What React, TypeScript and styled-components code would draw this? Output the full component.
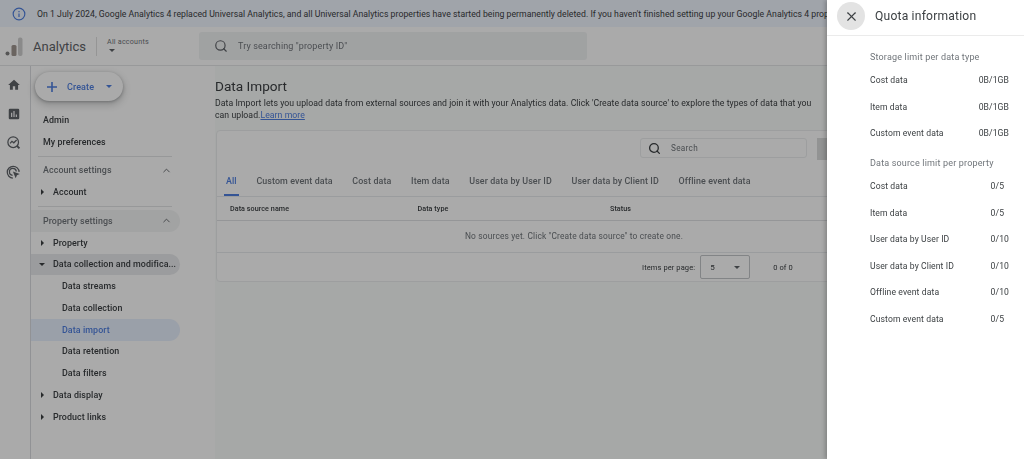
import React from "react";
import styled, { createGlobalStyle } from "styled-components";
import { Search, X, ChevronUp } from "lucide-react";

const SANS = `Roboto, "Liberation Sans", sans-serif`;

const GlobalStyle = createGlobalStyle`
  html, body {
    margin: 0;
    padding: 0;
    background: #fff;
  }
  * {
    box-sizing: border-box;
  }
`;

const Screen = styled.div`
  position: relative;
  width: 1024px;
  height: 459px;
  overflow: hidden;
  font-family: ${SANS};
  color: #3c4043;
  filter: blur(0.4px);
`;

const Page = styled.div`
  display: flex;
  flex-direction: column;
  width: 1024px;
  height: 459px;
`;

const Scrim = styled.div`
  position: absolute;
  inset: 0;
  background: rgba(0, 0, 0, 0.335);
`;

const Banner = styled.div`
  display: flex;
  align-items: center;
  gap: 11px;
  height: 27px;
  flex: none;
  padding-left: 12px;
  background: #f0f6ff;
  font-size: 8.7px;
  letter-spacing: 0.03px;
  white-space: nowrap;
  overflow: hidden;
  color: #3c4043;
`;

const Header = styled.header`
  display: flex;
  align-items: center;
  height: 39px;
  flex: none;
  padding-left: 5px;
  background: #fff;
  border-bottom: 1px solid #e4e6e8;
`;

const Brand = styled.div`
  margin-left: 10px;
  font-size: 13px;
  width: 63px;
  color: #5f6368;
`;

const AccountPicker = styled.div`
  display: flex;
  flex-direction: column;
  gap: 3px;
  height: 19px;
  width: 103px;
  padding-left: 10px;
  border-left: 1px solid #e0e0e0;
  font-size: 7.2px;
  line-height: 9px;
  letter-spacing: 0.2px;
  color: #70757a;
`;

const PickerCaret = styled.span`
  display: block;
  width: 0;
  height: 0;
  margin-left: 2px;
  border-left: 3px solid transparent;
  border-right: 3px solid transparent;
  border-top: 3px solid #5f6368;
`;

const Caret = styled.span<{ color?: string }>`
  display: block;
  flex: none;
  width: 0;
  height: 0;
  border-left: 3px solid transparent;
  border-right: 3px solid transparent;
  border-top: 3px solid ${(p) => p.color ?? "#5f6368"};
`;

const SideCaret = styled.span<{ open?: boolean }>`
  display: block;
  width: 0;
  height: 0;
  ${(p) =>
    p.open
      ? `border-left: 3px solid transparent;
         border-right: 3px solid transparent;
         border-top: 3px solid #3c4043;`
      : `border-top: 3px solid transparent;
         border-bottom: 3px solid transparent;
         border-left: 3px solid #3c4043;`}
`;

const GlobalSearch = styled.div`
  display: flex;
  align-items: center;
  gap: 10px;
  width: 388px;
  height: 28px;
  padding-left: 15px;
  border-radius: 3px;
  background: #f1f3f4;
  font-size: 9px;
  letter-spacing: 0.13px;
  color: #70757a;
`;

const Body = styled.div`
  display: flex;
  flex: 1;
  min-height: 0;
`;

const Rail = styled.nav`
  display: flex;
  flex-direction: column;
  align-items: center;
  gap: 14.5px;
  flex: none;
  width: 31px;
  padding-top: 12px;
  padding-right: 3px;
  background: #fff;
  border-right: 1px solid #dadce0;
`;

const Sidebar = styled.aside`
  display: flex;
  flex-direction: column;
  flex: none;
  width: 184px;
  background: #fff;
`;

const CreateButton = styled.div`
  display: flex;
  align-items: center;
  width: 88px;
  height: 29px;
  margin: 6px 0 8px 4px;
  padding-left: 11px;
  border-radius: 15px;
  background: #fff;
  box-shadow: 0 1px 3px rgba(60, 64, 67, 0.35), 0 3px 6px 2px rgba(60, 64, 67, 0.18);
  font-size: 9px;
  font-weight: 500;
  letter-spacing: 0.1px;
  color: #4f7fe0;
`;

const CreateLabel = styled.span`
  margin: 0 12px 0 9px;
`;

const NavItem = styled.div<{ depth?: number; active?: boolean; tone?: "open" | "section" }>`
  display: flex;
  align-items: center;
  width: 149px;
  height: 21.75px;
  flex: none;
  padding-left: ${(p) => [12, 8, 31][p.depth ?? 0]}px;
  border-radius: 0 11px 11px 0;
  font-size: 8.9px;
  font-weight: 500;
  letter-spacing: 0.08px;
  white-space: nowrap;
  color: ${(p) => (p.active ? "#4f7fe0" : "#3c4043")};
  background: ${(p) => (p.active ? "#e8f0fe" : p.tone === "open" ? "#e9eaed" : p.tone === "section" ? "#f4f5f5" : "none")};
`;

const CaretSlot = styled.span`
  display: flex;
  justify-content: center;
  width: 6px;
  margin-right: 8px;
`;

const SectionHead = styled(NavItem)`
  justify-content: space-between;
  padding-right: 8px;
  color: #70757a;
`;

const Rule = styled.div`
  width: 134px;
  height: 1px;
  flex: none;
  margin: 3px 0 3px 7px;
  background: #e3e4e6;
`;

const Main = styled.main`
  flex: 1;
  min-width: 0;
  padding: 11px 0 0 0;
  background: #fafcfb;
`;

const Title = styled.h1`
  margin: 0 0 2px;
  font-size: 13.6px;
  line-height: 18px;
  font-weight: 400;
  color: #3c4043;
`;

const Description = styled.p`
  width: 600px;
  margin: 0 0 9px;
  font-size: 8.7px;
  line-height: 12px;
  letter-spacing: 0.05px;
  color: #3c4043;
`;

const Link = styled.span`
  color: #4f7fe0;
  text-decoration: underline;
`;

const Card = styled.section`
  width: 620px;
  height: 152px;
  margin-left: 1px;
  background: #fff;
  border: 1px solid #eceeef;
  border-radius: 4px 0 0 4px;
`;

const CardTop = styled.div`
  display: flex;
  justify-content: flex-end;
  gap: 10px;
  height: 42px;
  padding-top: 7px;
`;

const TableSearch = styled.div`
  display: flex;
  align-items: center;
  gap: 10px;
  width: 167px;
  height: 20px;
  padding-left: 7px;
  border: 1px solid #eceeef;
  border-radius: 3px;
  font-size: 8.2px;
  letter-spacing: 0.3px;
  color: #70757a;
`;

const ScrollStub = styled.div`
  width: 18px;
  height: 22px;
  background: #dcdddd;
`;

const Tabs = styled.div`
  display: flex;
  height: 24px;
  padding-left: 7px;
  border-bottom: 1px solid #e8eaed;
`;

const Tab = styled.div<{ active?: boolean }>`
  display: flex;
  align-items: flex-start;
  height: 23px;
  margin-right: 15.7px;
  padding: 3px 2px 0;
  font-size: 8.9px;
  font-weight: 500;
  letter-spacing: 0.1px;
  color: ${(p) => (p.active ? "#4f7fe0" : "#70757a")};
  border-bottom: 2px solid ${(p) => (p.active ? "#4f7fe0" : "transparent")};
`;

const HeaderRow = styled.div`
  display: grid;
  grid-template-columns: 187.5px 192.5px 1fr;
  align-items: center;
  height: 24px;
  padding-left: 13px;
  border-bottom: 1px solid #e0e2e4;
  font-size: 7.2px;
  font-weight: 500;
  letter-spacing: 0.05px;
  color: #3c4043;
`;

const EmptyRow = styled.div`
  display: flex;
  align-items: center;
  justify-content: center;
  height: 32px;
  padding: 0 0 1px 96px;
  border-bottom: 1px solid #e8eaed;
  font-size: 8.4px;
  letter-spacing: 0.16px;
  color: #70757a;
`;

const Pager = styled.div`
  display: flex;
  align-items: center;
  height: 28px;
  padding-left: 425px;
  font-size: 7.5px;
  letter-spacing: 0.1px;
  color: #3c4043;
`;

const PageSize = styled.div`
  display: flex;
  align-items: center;
  justify-content: space-between;
  width: 50px;
  height: 24px;
  margin: 0 23px 0 5px;
  padding: 0 9px;
  border: 1px solid #c4c6c9;
  border-radius: 2px;
  font-size: 8px;
`;

const Drawer = styled.aside`
  position: absolute;
  top: 0;
  right: 0;
  bottom: 0;
  width: 197px;
  background: #fff;
  box-shadow: -2px 0 4px rgba(0, 0, 0, 0.22);
`;

const DrawerHead = styled.div`
  display: flex;
  align-items: center;
  gap: 10px;
  height: 36px;
  padding: 0 0 3px 10px;
  border-bottom: 1px solid #ebebeb;
`;

const CloseButton = styled.div`
  display: flex;
  align-items: center;
  justify-content: center;
  width: 28px;
  height: 28px;
  border-radius: 50%;
  background: #e3e3e3;
  color: #3c4043;
`;

const DrawerTitle = styled.div`
  font-size: 12.1px;
  letter-spacing: 0.2px;
  color: #3c4043;
`;

const QuotaList = styled.div`
  display: flex;
  flex-direction: column;
  padding: 0 15px 0 43px;
`;

const QuotaHeading = styled.div<{ first?: boolean }>`
  padding-top: ${(p) => (p.first ? 15 : 10)}px;
  height: ${(p) => (p.first ? 31 : 26)}px;
  font-size: 9px;
  line-height: 12px;
  letter-spacing: 0.17px;
  color: #70757a;
`;

const QuotaRows = styled.div`
  display: grid;
  grid-template-columns: 1fr auto;
  grid-auto-rows: 26.6px;
  align-items: center;
  font-size: 8.6px;
  letter-spacing: 0.1px;
  color: #3c4043;
`;

const HomeIcon = () => (
  <svg width="14" height="14" viewBox="0 0 24 24" fill="#5f6368">
    <path d="M10 20v-6h4v6h5v-8h3L12 3 2 12h3v8z" />
  </svg>
);

const ReportsIcon = () => (
  <svg width="14" height="14" viewBox="0 0 24 24" fill="#5f6368">
    <path d="M19 3H5a2 2 0 0 0-2 2v14a2 2 0 0 0 2 2h14a2 2 0 0 0 2-2V5a2 2 0 0 0-2-2zM9 17H7v-7h2v7zm4 0h-2V7h2v10zm4 0h-2v-4h2v4z" />
  </svg>
);

const ExploreIcon = () => (
  <svg width="15" height="15" viewBox="0 0 24 24" fill="none" stroke="#5f6368" strokeWidth="2">
    <circle cx="11.5" cy="11.5" r="8.5" />
    <path d="M6.5 13.5l3-3.5 3 2.5 4.5-4.5" />
    <path d="M17.5 17.5L21.5 21.5" strokeWidth="3" />
  </svg>
);

const AdvertisingIcon = () => (
  <svg width="15" height="15" viewBox="0 0 24 24" fill="none" stroke="#5f6368" strokeWidth="2">
    <path d="M11 21a9.5 9.5 0 1 1 10-10" />
    <path d="M10.5 16.5a5.5 5.5 0 1 1 6-6" />
    <path d="M11 10.5l11 4-4.5 1.8L15.5 21z" fill="#5f6368" stroke="none" />
  </svg>
);

const LogoIcon = () => (
  <svg width="18" height="19" viewBox="0 0 18 19">
    <circle cx="2.5" cy="16.5" r="2" fill="#808080" />
    <rect x="6.5" y="8" width="5" height="11" rx="1.5" fill="#a09690" />
    <rect x="13" y="0.5" width="4.5" height="18.5" rx="2" fill="#cfcfcf" />
  </svg>
);

const InfoIcon = () => (
  <svg width="14" height="14" viewBox="0 0 24 24" fill="none" stroke="#4f7fe0" strokeWidth="2">
    <circle cx="12" cy="12" r="10" />
    <path d="M12 11v6M12 7v2" />
  </svg>
);

const PlusIcon = () => (
  <svg width="12" height="12" viewBox="0 0 12 12" stroke="#4f7fe0" strokeWidth="1.6">
    <path d="M6 1v10M1 6h10" />
  </svg>
);

const storage = ["Cost data", "Item data", "Custom event data"];
const sources: [string, string][] = [
  ["Cost data", "0/5"],
  ["Item data", "0/5"],
  ["User data by User ID", "0/10"],
  ["User data by Client ID", "0/10"],
  ["Offline event data", "0/10"],
  ["Custom event data", "0/5"],
];
const tabs = [
  "All",
  "Custom event data",
  "Cost data",
  "Item data",
  "User data by User ID",
  "User data by Client ID",
  "Offline event data",
];

const App: React.FC = () => {
  return (
    <Screen>
      <GlobalStyle />
      <Page>
        <Banner>
          <InfoIcon />
          On 1 July 2024, Google Analytics 4 replaced Universal Analytics, and all Universal Analytics properties have
          started being permanently deleted. If you haven't finished setting up your Google Analytics 4 property
        </Banner>
        <Header>
          <LogoIcon />
          <Brand>Analytics</Brand>
          <AccountPicker>
            All accounts
            <PickerCaret />
          </AccountPicker>
          <GlobalSearch>
            <Search size={14} strokeWidth={2} color="#5f6368" />
            Try searching "property ID"
          </GlobalSearch>
        </Header>
        <Body>
          <Rail>
            <HomeIcon />
            <ReportsIcon />
            <ExploreIcon />
            <AdvertisingIcon />
          </Rail>
          <Sidebar>
            <CreateButton>
              <PlusIcon />
              <CreateLabel>Create</CreateLabel>
              <Caret color="#4f7fe0" />
            </CreateButton>
            <NavItem>Admin</NavItem>
            <NavItem>My preferences</NavItem>
            <Rule />
            <SectionHead>
              Account settings
              <ChevronUp size={11} color="#5f6368" />
            </SectionHead>
            <NavItem depth={1}>
              <CaretSlot>
                <SideCaret />
              </CaretSlot>
              Account
            </NavItem>
            <Rule />
            <SectionHead tone="section">
              Property settings
              <ChevronUp size={11} color="#5f6368" />
            </SectionHead>
            <NavItem depth={1}>
              <CaretSlot>
                <SideCaret />
              </CaretSlot>
              Property
            </NavItem>
            <NavItem depth={1} tone="open">
              <CaretSlot>
                <SideCaret open />
              </CaretSlot>
              Data collection and modifica...
            </NavItem>
            <NavItem depth={2}>Data streams</NavItem>
            <NavItem depth={2}>Data collection</NavItem>
            <NavItem depth={2} active>
              Data import
            </NavItem>
            <NavItem depth={2}>Data retention</NavItem>
            <NavItem depth={2}>Data filters</NavItem>
            <NavItem depth={1}>
              <CaretSlot>
                <SideCaret />
              </CaretSlot>
              Data display
            </NavItem>
            <NavItem depth={1}>
              <CaretSlot>
                <SideCaret />
              </CaretSlot>
              Product links
            </NavItem>
          </Sidebar>
          <Main>
            <Title>Data Import</Title>
            <Description>
              Data Import lets you upload data from external sources and join it with your Analytics data. Click 'Create
              data source' to explore the types of data that you can upload.<Link>Learn more</Link>
            </Description>
            <Card>
              <CardTop>
                <TableSearch>
                  <Search size={13} strokeWidth={2.4} color="#3c4043" />
                  Search
                </TableSearch>
                <ScrollStub />
              </CardTop>
              <Tabs>
                {tabs.map((t, i) => (
                  <Tab key={t} active={i === 0}>
                    {t}
                  </Tab>
                ))}
              </Tabs>
              <HeaderRow>
                <span>Data source name</span>
                <span>Data type</span>
                <span>Status</span>
              </HeaderRow>
              <EmptyRow>No sources yet. Click "Create data source" to create one.</EmptyRow>
              <Pager>
                Items per page:
                <PageSize>
                  5
                  <Caret />
                </PageSize>
                0 of 0
              </Pager>
            </Card>
          </Main>
        </Body>
      </Page>
      <Scrim />
      <Drawer>
        <DrawerHead>
          <CloseButton>
            <X size={15} strokeWidth={1.8} />
          </CloseButton>
          <DrawerTitle>Quota information</DrawerTitle>
        </DrawerHead>
        <QuotaList>
          <QuotaHeading first>Storage limit per data type</QuotaHeading>
          <QuotaRows>
            {storage.map((s) => (
              <React.Fragment key={s}>
                <span>{s}</span>
                <span>0B/1GB</span>
              </React.Fragment>
            ))}
          </QuotaRows>
          <QuotaHeading>Data source limit per property</QuotaHeading>
          <QuotaRows>
            {sources.map(([s, v]) => (
              <React.Fragment key={s}>
                <span>{s}</span>
                <span>{v}</span>
              </React.Fragment>
            ))}
          </QuotaRows>
        </QuotaList>
      </Drawer>
    </Screen>
  );
};

export default App;
